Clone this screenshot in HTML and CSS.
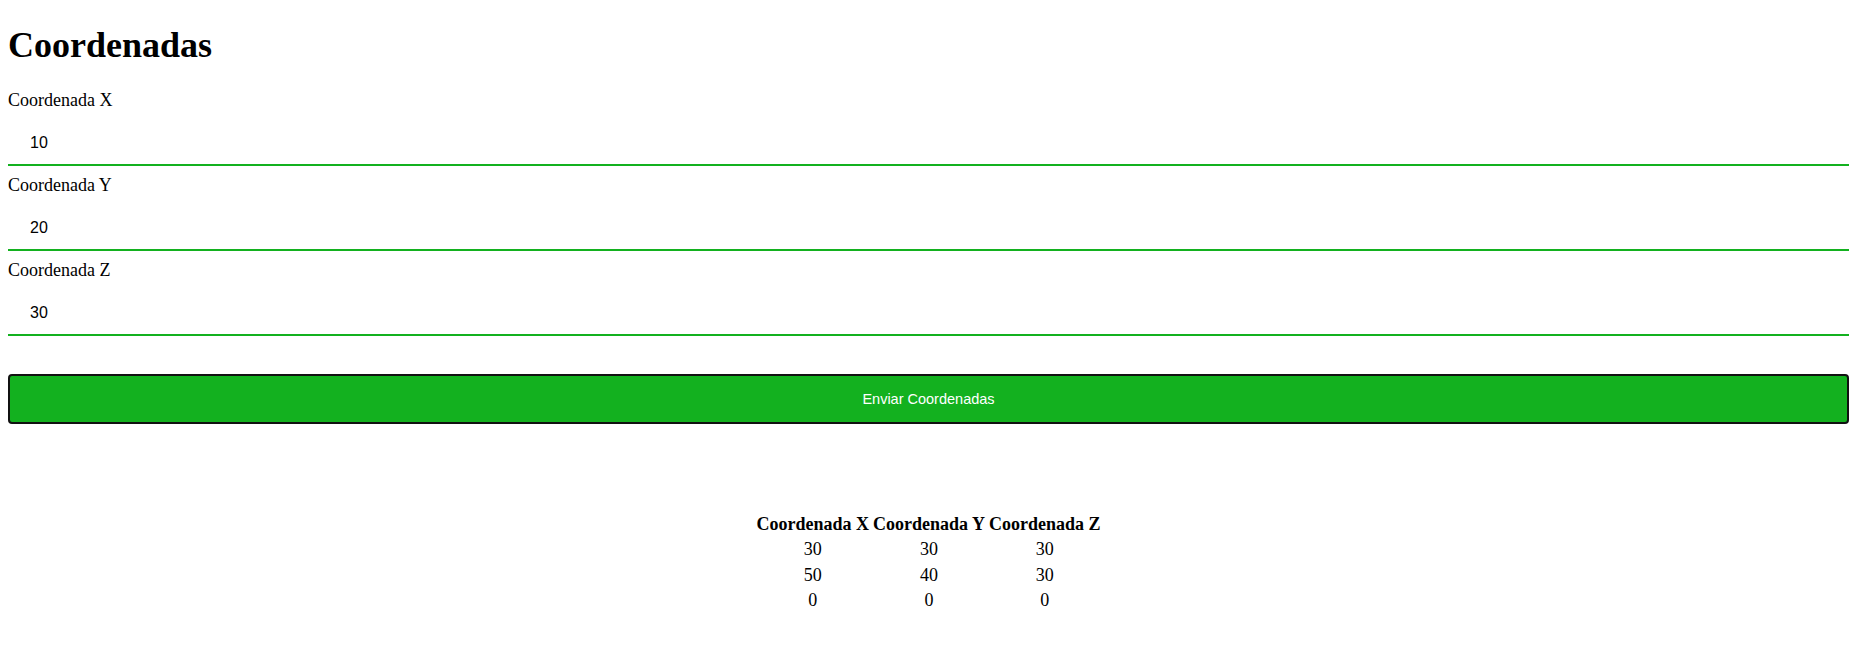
FILE: index.html
```html
<!DOCTYPE html>
<html lang="es">
<head>
<meta charset="utf-8">
<title>Coordenadas</title>
<link rel="stylesheet" href="styles.css">
</head>
<body>
<h1 class="title">Coordenadas</h1>
<form class="coord-form">
  <label class="field-label" for="x">Coordenada X</label>
  <input class="field-input" id="x" type="text" value="10">
  <label class="field-label" for="y">Coordenada Y</label>
  <input class="field-input" id="y" type="text" value="20">
  <label class="field-label" for="z">Coordenada Z</label>
  <input class="field-input" id="z" type="text" value="30">
  <button class="submit-btn" type="button">Enviar Coordenadas</button>
</form>
<table class="coord-table">
  <thead>
    <tr><th>Coordenada X</th><th>Coordenada Y</th><th>Coordenada Z</th></tr>
  </thead>
  <tbody>
    <tr><td>30</td><td>30</td><td>30</td></tr>
    <tr><td>50</td><td>40</td><td>30</td></tr>
    <tr><td>0</td><td>0</td><td>0</td></tr>
  </tbody>
</table>
</body>
</html>
```
FILE: styles.css
```css
html, body {
  background: #fff;
}
body {
  margin: 8px;
  font-family: "Liberation Serif", "Times New Roman", serif;
  font-size: 18px;
  color: #000;
}
.title {
  font-size: 36px;
  font-weight: bold;
  margin: 16px 0 24.12px;
}
.coord-form {
  margin: 0;
}
.field-label {
  display: block;
  line-height: normal;
}
.field-input {
  display: block;
  width: 100%;
  box-sizing: border-box;
  margin: 10.5px 0 9.5px;
  padding: 12px 22px;
  border: none;
  border-bottom: 2px solid #13b11f;
  outline: none;
  background: #fff;
  font-family: "Liberation Sans", Arial, sans-serif;
  font-size: 16px;
  line-height: normal;
  color: #000;
}
.submit-btn {
  display: block;
  width: 100%;
  box-sizing: border-box;
  margin: 38px 0 0;
  padding: 15px 0;
  border: 2px solid #111;
  border-radius: 4px;
  background: #13b11f;
  color: #fff;
  font-family: "Liberation Sans", Arial, sans-serif;
  font-size: 14.5px;
  line-height: 16px;
  cursor: pointer;
}
.coord-table {
  margin: 87px auto 0;
  border-spacing: 2px;
}
.coord-table th,
.coord-table td {
  padding: 1px;
  line-height: 21.5px;
  text-align: center;
}
.coord-table th {
  font-weight: bold;
}
```
